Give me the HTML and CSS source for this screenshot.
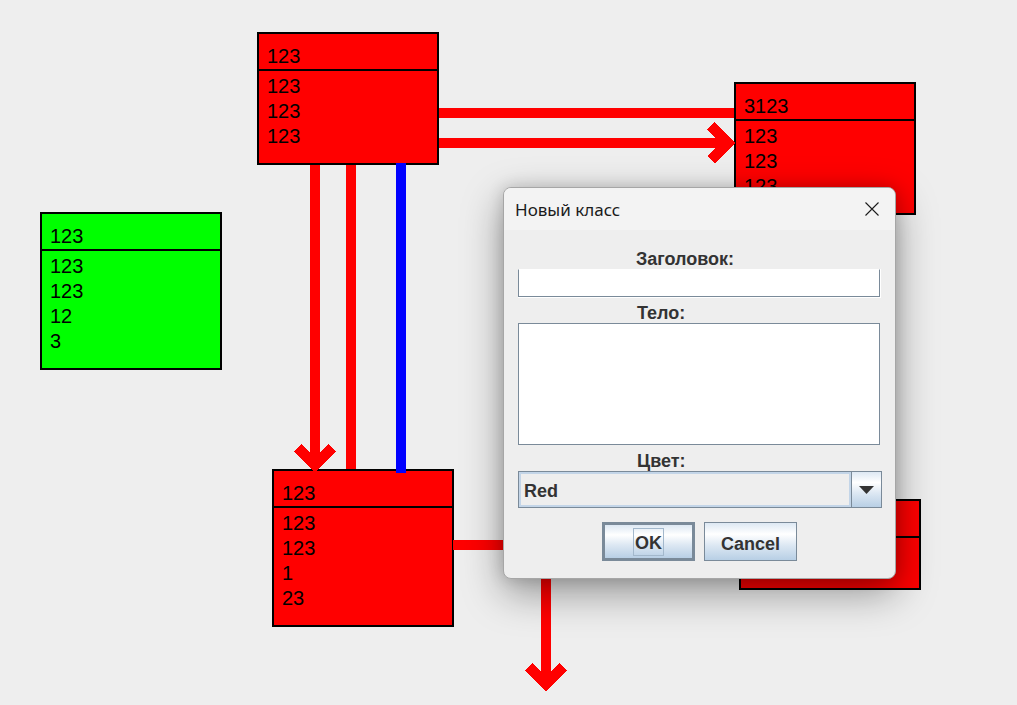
FILE: index.html
```html
<!DOCTYPE html>
<html lang="ru">
<head>
<meta charset="utf-8">
<title>Диаграмма классов</title>
<link rel="stylesheet" href="styles.css">
</head>
<body>
<div class="canvas">
  <div class="node n1">
    <div class="node__head">123</div>
    <div class="node__body"><div>123</div><div>123</div><div>123</div></div>
  </div>
  <div class="node n2">
    <div class="node__head">3123</div>
    <div class="node__body"><div>123</div><div>123</div><div>123</div></div>
  </div>
  <div class="node node--green n3">
    <div class="node__head">123</div>
    <div class="node__body"><div>123</div><div>123</div><div>12</div><div>3</div></div>
  </div>
  <div class="node n4">
    <div class="node__head">123</div>
    <div class="node__body"><div>123</div><div>123</div><div>1</div><div>23</div></div>
  </div>
  <div class="node n5">
    <div class="node__head">123</div>
    <div class="node__body node__body--short"></div>
  </div>

  <svg class="links" width="1017" height="705" viewBox="0 0 1017 705" shape-rendering="crispEdges">
    <g fill="none" stroke="#ff0000" stroke-width="10" stroke-linejoin="miter" stroke-linecap="butt">
      <line x1="439" y1="113" x2="734" y2="113"/>
      <line x1="439" y1="143" x2="728" y2="143"/>
      <polyline points="711,126 728,143 711,160"/>
      <line x1="315" y1="165" x2="315" y2="465"/>
      <polyline points="298,448 315,465 332,448"/>
      <line x1="351" y1="165" x2="351" y2="469"/>
      <line x1="453" y1="545" x2="551" y2="545"/>
      <line x1="546" y1="540" x2="546" y2="684"/>
      <polyline points="529,667 546,684 563,667"/>
    </g>
    <line x1="401" y1="163" x2="401" y2="473" stroke="#0000ff" stroke-width="10"/>
  </svg>

  <div class="dialog">
    <div class="titlebar">
      <span class="titlebar__text">Новый класс</span>
      <svg class="titlebar__close" width="14" height="14" viewBox="0 0 14 14">
        <path d="M0.5 0.5 L13.5 13.5 M13.5 0.5 L0.5 13.5" stroke="#1c1c1c" stroke-width="1.1" fill="none"/>
      </svg>
    </div>
    <div class="dialog__body">
      <div class="label">Заголовок:</div>
      <div class="field"><div class="field__inner"></div></div>
      <div class="label label--gap">Тело:</div>
      <div class="area"></div>
      <div class="label label--gap2">Цвет:</div>
      <div class="combo">
        <div class="combo__value">Red</div>
        <div class="combo__btn">
          <svg width="15" height="8" viewBox="0 0 15 8"><polygon points="0,0 15,0 7.5,8" fill="#333333"/></svg>
        </div>
      </div>
      <div class="buttons">
        <div class="btn btn--default"><span class="btn__focus">OK</span></div>
        <div class="btn">Cancel</div>
      </div>
    </div>
  </div>
</div>
</body>
</html>
```
FILE: styles.css
```css
* { box-sizing: border-box; }
html, body { margin: 0; padding: 0; }
body {
  width: 1017px;
  height: 705px;
  overflow: hidden;
  background: #eeeeee;
  font-family: "Liberation Sans", Arial, sans-serif;
}
.canvas {
  position: relative;
  width: 1017px;
  height: 705px;
}

/* diagram nodes */
.node {
  position: absolute;
  width: 182px;
  border: 2px solid #000;
  background: #ff0000;
  color: #000;
  font-size: 20px;
  line-height: 25px;
}
.node--green { background: #00ff00; }
.node__head {
  height: 37px;
  padding: 10px 0 0 8px;
  border-bottom: 2px solid #000;
}
.node__body { padding: 3px 0 14px 8px; }
.node__body--short { height: 50px; }

.n1 { left: 257px; top: 32px; }
.n2 { left: 734px; top: 82px; }
.n3 { left: 40px; top: 212px; }
.n4 { left: 272px; top: 469px; }
.n5 { left: 739px; top: 499px; }

.links {
  position: absolute;
  left: 0;
  top: 0;
}

/* dialog window */
.dialog {
  position: absolute;
  left: 503px;
  top: 187px;
  width: 393px;
  border: 1px solid #a6a6a6;
  border-radius: 8px;
  background: #eeeeee;
  overflow: hidden;
  box-shadow: 0 14px 40px rgba(0, 0, 0, 0.38), 0 0 16px rgba(0, 0, 0, 0.16);
}
.titlebar {
  height: 42px;
  background: #f3f3f3;
  display: flex;
  align-items: center;
  justify-content: space-between;
  padding: 0 16px 0 11px;
}
.titlebar__text {
  font-family: "Noto Sans", "Open Sans", sans-serif;
  font-size: 17px;
  color: #1b1b1b;
}
.titlebar__close { display: block; }

.dialog__body {
  display: flex;
  flex-direction: column;
  padding: 19px 14px 17px 14px;
}
.label {
  font-size: 18px;
  font-weight: bold;
  line-height: 20px;
  color: #333333;
  padding-left: 118px;
}
.label--gap { margin-top: 5px; padding-left: 119px; }
.label--gap2 { margin-top: 6px; padding-left: 119px; }

.field {
  height: 29px;
  background: #ffffff;
  padding: 0 1px 1px 0;
}
.field__inner {
  height: 100%;
  border: 1px solid #7a8a99;
  border-top-color: #ffffff;
}
.area {
  height: 122px;
  margin-right: 1px;
  background: #ffffff;
  border: 1px solid #7a8a99;
}

.combo {
  display: flex;
  height: 37px;
  margin-right: -1px;
  border: 1px solid #7a8a99;
}
.combo__value {
  flex: 1;
  display: flex;
  align-items: center;
  padding: 4px 0 0 3px;
  border: 2px solid #c3d5e8;
  background: #eeeeee;
  font-size: 18px;
  font-weight: bold;
  color: #333333;
}
.combo__btn {
  width: 30px;
  border-left: 1px solid #7a8a99;
  display: flex;
  align-items: center;
  justify-content: center;
  background: linear-gradient(#dde8f3 0%, #ffffff 30%, #dde8f3 60%, #b8cfe5 100%);
}
.combo__btn svg { display: block; }

.buttons {
  display: flex;
  justify-content: center;
  gap: 9px;
  margin-top: 14px;
}
.btn {
  width: 93px;
  height: 39px;
  border: 1px solid #7a8a99;
  display: flex;
  align-items: center;
  justify-content: center;
  padding-top: 5px;
  background: linear-gradient(#dde8f3 0%, #ffffff 30%, #dde8f3 60%, #b8cfe5 100%);
  font-size: 18px;
  font-weight: bold;
  color: #333333;
}
.btn--default {
  border-width: 3px;
  padding-top: 0;
}
.btn__focus {
  display: block;
  border: 1px solid #a3b8cc;
  padding: 3px 1px 0 1px;
  line-height: 23px;
}
```
